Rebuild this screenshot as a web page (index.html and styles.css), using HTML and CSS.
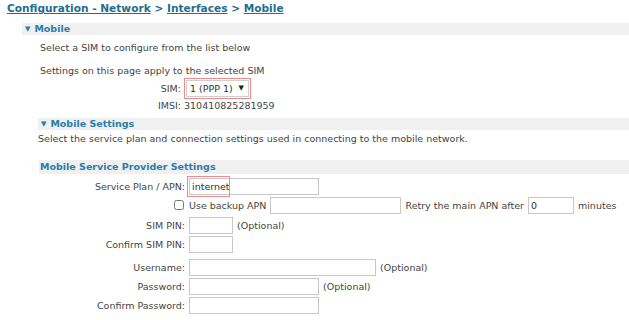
FILE: index.html
```html
<!DOCTYPE html>
<html lang="en">
<head>
  <meta charset="UTF-8" />
  <title>Configuration - Network - Interfaces - Mobile</title>
  <link rel="stylesheet" href="styles.css">
</head>
<body>
  <div class="crumbs">
    <a href="#">Configuration - Network</a> &gt; <a href="#">Interfaces</a> &gt; <a href="#">Mobile</a>
  </div>

  <div class="section top">
    <div class="bar"><span class="arrow">&#9660;</span>Mobile</div>
    <div class="body">
      <p class="intro">Select a SIM to configure from the list below</p>
      <p class="note">Settings on this page apply to the selected SIM</p>
      <div class="sim-row">
        <span class="sim-label">SIM:</span>
        <span class="mark">
          <span class="select">1 (PPP 1) <span class="caret">&#9660;</span></span>
        </span>
      </div>
      <div class="sim-row imsi">
        <span class="sim-label">IMSI:</span>
        <span>310410825281959</span>
      </div>
    </div>

    <div class="section sub">
      <div class="bar"><span class="arrow">&#9660;</span>Mobile Settings</div>
      <p class="lead">Select the service plan and connection settings used in connecting to the mobile network.</p>

      <div class="bar plain">Mobile Service Provider Settings</div>
      <div class="form">
        <div class="row">
          <label class="lbl">Service Plan / APN:</label>
          <span class="apn">
            <input class="field w130" type="text" value="internet">
            <span class="mark apn-mark"></span>
          </span>
        </div>
        <div class="row">
          <span class="lbl"><input class="check" type="checkbox"></span>
          <span class="txt first">Use backup APN</span>
          <input class="field w131" type="text">
          <span class="txt">Retry the main APN after</span>
          <input class="field w45" type="text" value="0">
          <span class="txt">minutes</span>
        </div>
        <div class="row pin">
          <label class="lbl">SIM PIN:</label>
          <input class="field w44" type="text">
          <span class="txt">(Optional)</span>
        </div>
        <div class="row">
          <label class="lbl">Confirm SIM PIN:</label>
          <input class="field w44" type="text">
        </div>
        <div class="row user">
          <label class="lbl">Username:</label>
          <input class="field w187" type="text">
          <span class="txt">(Optional)</span>
        </div>
        <div class="row">
          <label class="lbl">Password:</label>
          <input class="field w130" type="password">
          <span class="txt">(Optional)</span>
        </div>
        <div class="row">
          <label class="lbl">Confirm Password:</label>
          <input class="field w130" type="password">
        </div>
      </div>
    </div>
  </div>
</body>
</html>
```

FILE: styles.css
```css
body {
  margin: 0;
  padding: 0;
  font-family: "DejaVu Sans", Verdana, sans-serif;
  font-size: 9.5px;
  color: #444;
  background: #fff;
}

p {
  margin: 0;
}

.crumbs {
  padding: 1px 0 0 7px;
  height: 15px;
  line-height: 14px;
  font-weight: bold;
  font-size: 10.6px;
  color: #1d6f8f;
}

.crumbs a {
  color: #1d6f8f;
  text-decoration: underline;
}

.section.top {
  margin: 7px 0 0 22px;
}

.bar {
  background: #f0f0f0;
  height: 12px;
  line-height: 12px;
  font-weight: bold;
  color: #2a7daa;
  padding-left: 3px;
}

.bar .arrow {
  font-size: 7px;
  margin-right: 4px;
  vertical-align: 1px;
}

.body {
  padding-left: 18px;
}

.intro {
  margin-top: 7px;
  line-height: 12px;
}

.note {
  margin-top: 11px;
  line-height: 12px;
}

.sim-row {
  display: flex;
  align-items: center;
  margin-top: 1px;
}

.sim-label {
  width: 141px;
  text-align: right;
  margin-right: 3px;
}

.mark {
  display: inline-block;
  border: 1px solid #ec8a8f;
  padding: 1px;
}

.select {
  display: inline-block;
  border: 1px solid #cfcfcf;
  padding: 1px 4px 1px 3px;
  height: 13px;
  line-height: 13px;
  width: 54px;
  color: #333;
}

.caret {
  font-size: 7px;
  float: right;
  color: #222;
}

.imsi {
  margin-top: 1px;
  line-height: 12px;
}

.section.sub {
  margin: 6px 0 0 16px;
}

.lead {
  margin-top: 3px;
  line-height: 12px;
}

.bar.plain {
  margin-top: 15px;
  margin-left: 1px;
  padding-left: 1px;
  height: 14px;
  line-height: 14px;
}

.form {
  margin-top: 3px;
}

.row {
  display: flex;
  align-items: center;
  height: 18px;
  margin-bottom: 1px;
  white-space: nowrap;
}

.row.pin {
  margin-top: 2px;
}

.row.user {
  margin-top: 5px;
}

.lbl {
  flex: none;
  width: 147px;
  margin-right: 4px;
  display: flex;
  justify-content: flex-end;
  align-items: center;
}

.txt {
  flex: none;
  margin: 0 4px;
}

.txt.first {
  margin-left: 0;
}

.field {
  flex: none;
  box-sizing: border-box;
  height: 17px;
  border: 1px solid #c8c8c8;
  padding: 0 2px;
  font-family: "DejaVu Sans", Verdana, sans-serif;
  font-size: 9.5px;
  color: #333;
  margin: 0;
}

.w130 { width: 130px; }
.w131 { width: 131px; }
.w187 { width: 187px; }
.w45 { width: 46px; }
.w44 { width: 44px; }

.apn {
  position: relative;
  display: inline-block;
  height: 17px;
}

.apn-mark {
  position: absolute;
  left: -2px;
  top: -2px;
  width: 41px;
  height: 19px;
  padding: 0;
}

.check {
  margin: 0 1px 0 0;
  width: 10px;
  height: 10px;
}
```
